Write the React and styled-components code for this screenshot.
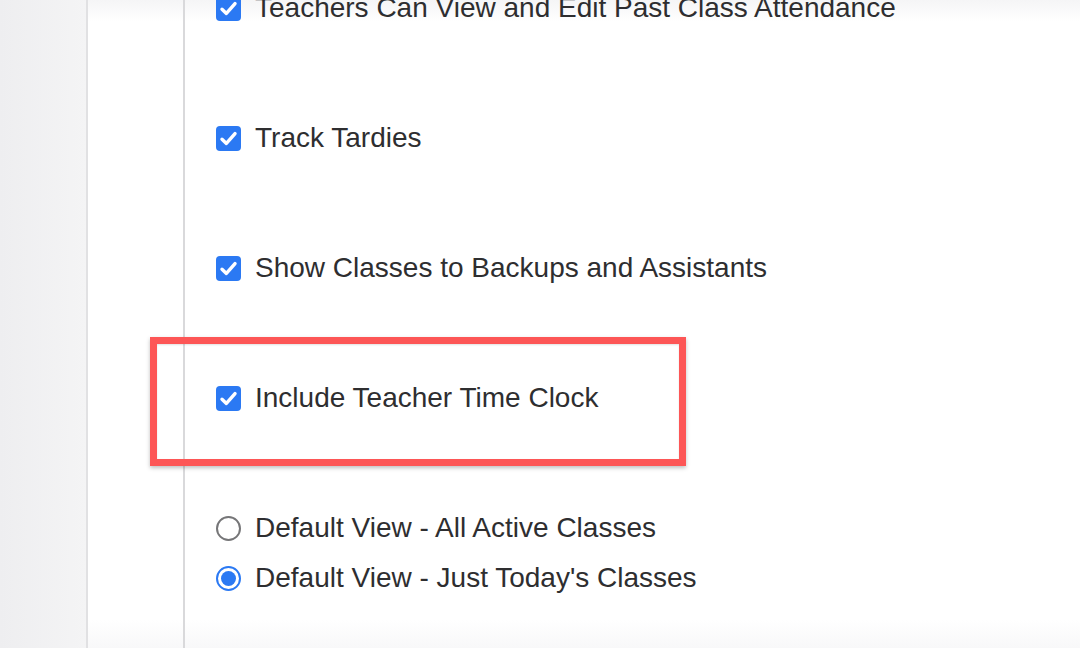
import React from "react";
import styled, { createGlobalStyle } from "styled-components";

const Global = createGlobalStyle`
  html, body { margin: 0; padding: 0; background: #ffffff; }
  body { font-family: "Liberation Sans", Arial, Helvetica, sans-serif; }
`;

const Page = styled.div`
  display: flex;
  height: 648px;
  overflow: hidden;
`;

const Gutter = styled.div`
  width: 86px;
  flex: none;
  background: linear-gradient(to right, #eeeef0, #f4f4f5);
  border-right: 2px solid #e1e1e3;
`;

const Panel = styled.div`
  flex: 1;
  display: flex;
  background: linear-gradient(
    to bottom,
    #f5f5f6 0px,
    #ffffff 22px,
    #ffffff 620px,
    #f8f8f9 648px
  );
`;

const Margin = styled.div`
  width: 95px;
  flex: none;
  border-right: 2px solid #d9d9db;
`;

const Settings = styled.div`
  flex: 1;
  display: flex;
  flex-direction: column;
  padding-left: 31px;
  margin-top: -17px;
`;

const Group = styled.div`
  display: flex;
  flex-direction: column;
  margin-bottom: ${(p) => p.$after || 0}px;
`;

const Option = styled.label`
  position: relative;
  display: flex;
  align-items: center;
  gap: 14px;
  height: 50px;
  font-size: 28px;
  color: #2e2e30;
  white-space: nowrap;
`;

const Box = styled.span`
  width: 25px;
  height: 25px;
  flex: none;
  border-radius: 4px;
  background: #2b79f3;
  display: flex;
  align-items: center;
  justify-content: center;
`;

const Radio = styled.span`
  width: 25px;
  height: 25px;
  box-sizing: border-box;
  flex: none;
  border-radius: 50%;
  border: 2px solid ${(p) => (p.$on ? "#2b79f3" : "#767678")};
  display: flex;
  align-items: center;
  justify-content: center;
  background: #fff;
  &::after {
    content: "";
    display: ${(p) => (p.$on ? "block" : "none")};
    width: 15px;
    height: 15px;
    border-radius: 50%;
    background: #2b79f3;
  }
`;

const Highlight = styled.span`
  position: absolute;
  left: -66px;
  top: -36px;
  width: 536px;
  height: 129px;
  box-sizing: border-box;
  border: 7px solid #fd5656;
  box-shadow: 0 2px 4px rgba(0, 0, 0, 0.25), inset 0 1px 2px rgba(0, 0, 0, 0.12);
  pointer-events: none;
`;

const Check = () => (
  <svg width="21" height="21" viewBox="0 0 21 21" aria-hidden="true">
    <path
      d="M4 11.2 L8.4 15.4 L17 5.6"
      fill="none"
      stroke="#ffffff"
      strokeWidth="3.4"
      strokeLinecap="round"
      strokeLinejoin="round"
    />
  </svg>
);

const CheckOption = ({ children, marked }) => (
  <Option>
    <Box>
      <Check />
    </Box>
    {children}
    {marked && <Highlight />}
  </Option>
);

export default function App() {
  return (
    <>
      <Global />
      <Page>
        <Gutter />
        <Panel>
          <Margin />
          <Settings>
            <Group $after={80}>
              <CheckOption>Teachers Can View and Edit Past Class Attendance</CheckOption>
            </Group>
            <Group $after={80}>
              <CheckOption>Track Tardies</CheckOption>
            </Group>
            <Group $after={80}>
              <CheckOption>Show Classes to Backups and Assistants</CheckOption>
            </Group>
            <Group $after={80}>
              <CheckOption marked>Include Teacher Time Clock</CheckOption>
            </Group>
            <Group>
              <Option>
                <Radio />
                Default View - All Active Classes
              </Option>
              <Option>
                <Radio $on />
                Default View - Just Today's Classes
              </Option>
            </Group>
          </Settings>
        </Panel>
      </Page>
    </>
  );
}
